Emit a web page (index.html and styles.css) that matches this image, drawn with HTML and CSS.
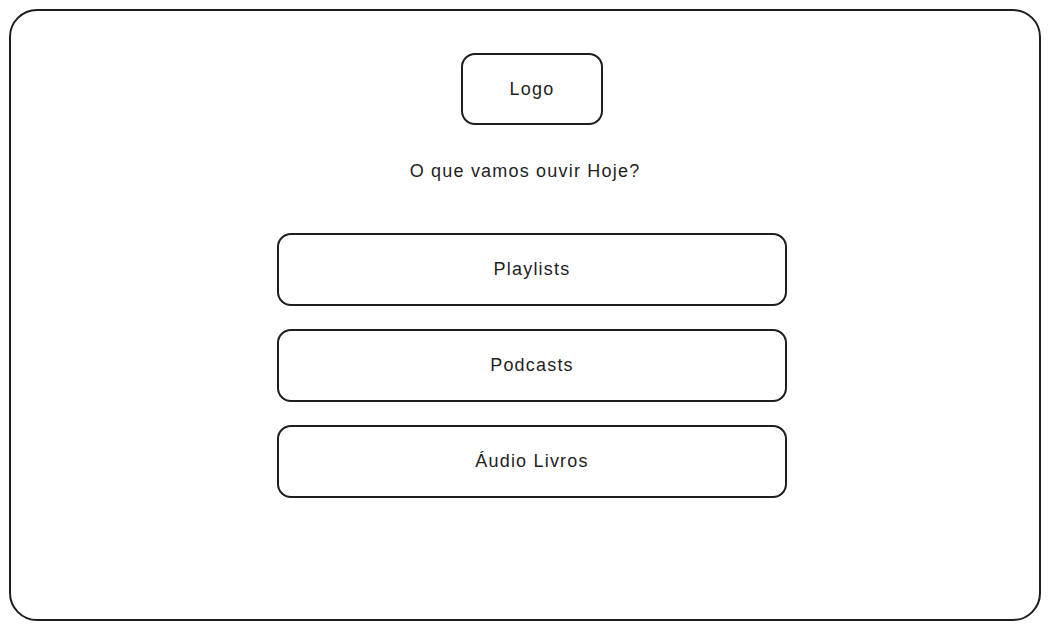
FILE: index.html
```html
<!DOCTYPE html>
<html>
<head>
    <title>O que vamos ouvir Hoje?</title>
    <link rel="stylesheet" href="styles.css">
</head>
<body>
    <div class="frame">
        <div class="logo-box">Logo</div>
        <p class="question">O que vamos ouvir Hoje?</p>
        <div class="menu">
            <button class="menu-item">Playlists</button>
            <button class="menu-item">Podcasts</button>
            <button class="menu-item">Áudio Livros</button>
        </div>
    </div>
</body>
</html>
```
FILE: styles.css
```css
body {
    margin: 0;
    padding: 0;
    background: #ffffff;
    font-family: "Liberation Sans", Arial, sans-serif;
    color: #1e1e1e;
}

.frame {
    box-sizing: border-box;
    margin: 9px;
    width: 1032px;
    height: 612px;
    border: 2px solid #1e1e1e;
    border-radius: 28px;
    display: flex;
    flex-direction: column;
    align-items: center;
    padding-top: 42px;
}

.logo-box {
    box-sizing: border-box;
    width: 142px;
    height: 72px;
    margin-left: 14px;
    border: 2px solid #1e1e1e;
    border-radius: 14px;
    display: flex;
    justify-content: center;
    align-items: center;
    font-size: 18px;
    letter-spacing: 1.2px;
}

.question {
    margin: 36px 0 0;
    font-size: 18px;
    letter-spacing: 1.2px;
    line-height: 20px;
}

.menu {
    margin-top: 52px;
    margin-left: 14px;
    display: flex;
    flex-direction: column;
    gap: 23px;
}

.menu-item {
    box-sizing: border-box;
    width: 510px;
    height: 73px;
    background: white;
    border: 2px solid #1e1e1e;
    border-radius: 14px;
    font-family: inherit;
    font-size: 18px;
    letter-spacing: 1.2px;
    color: #1e1e1e;
    cursor: pointer;
}
```
